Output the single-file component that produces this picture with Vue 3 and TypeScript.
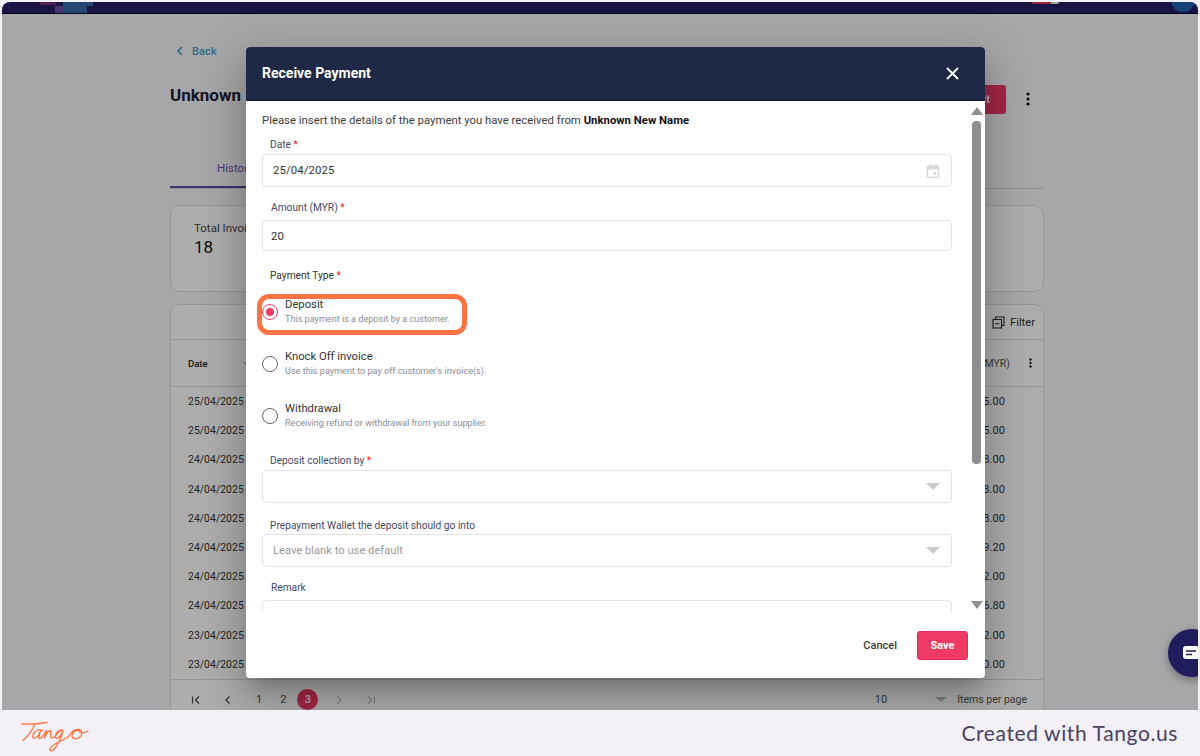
<script setup lang="ts">
interface PayType {
  id: string;
  title: string;
  hint: string;
  checked: boolean;
}

const rows = [
  { date: '25/04/2025', amount: '5.00' },
  { date: '25/04/2025', amount: '5.00' },
  { date: '24/04/2025', amount: '8.00' },
  { date: '24/04/2025', amount: '8.00' },
  { date: '24/04/2025', amount: '8.00' },
  { date: '24/04/2025', amount: '9.20' },
  { date: '24/04/2025', amount: '2.00' },
  { date: '24/04/2025', amount: '6.80' },
  { date: '23/04/2025', amount: '2.00' },
  { date: '23/04/2025', amount: '0.00' },
]

const payTypes: PayType[] = [
  { id: 'deposit', title: 'Deposit', hint: 'This payment is a deposit by a customer.', checked: true },
  { id: 'knock', title: 'Knock Off invoice', hint: "Use this payment to pay off customer's invoice(s).", checked: false },
  { id: 'withdraw', title: 'Withdrawal', hint: 'Receiving refund or withdrawal from your supplier.', checked: false },
]
</script>

<template>
  <div class="root">
    <div class="screen">
      <header class="topbar">
        <span class="px px-a"></span>
        <span class="px px-b"></span>
        <span class="px px-c"></span>
        <span class="px px-d"></span>
        <span class="px px-e"></span>
        <span class="px px-f"></span>
      </header>

      <main class="page">
        <div class="back">
          <svg width="12" height="12" viewBox="0 0 12 12"><path d="M8 2 4 6l4 4" fill="none" stroke="#3f9cc9" stroke-width="1.7" /></svg>
          <span>Back</span>
        </div>

        <div class="title-row">
          <h1>Unknown New Name</h1>
          <div class="title-actions">
            <button class="edit-btn">Edit</button>
            <svg class="dots" width="4" height="14" viewBox="0 0 4 14"><circle cx="2" cy="2" r="1.6" /><circle cx="2" cy="7" r="1.6" /><circle cx="2" cy="12" r="1.6" /></svg>
          </div>
        </div>

        <div class="tabs">
          <div class="tab">History</div>
        </div>

        <section class="summary">
          <div class="sum-label">Total Invoices</div>
          <div class="sum-value">18</div>
        </section>

        <section class="table-card">
          <div class="table-tools">
            <svg width="13" height="13" viewBox="0 0 13 13" fill="none" stroke="#2c2c2c" stroke-width="1.1"><rect x="1" y="3.5" width="8.5" height="8.5" /><path d="M3.5 3.5V1H12v8.5H9.5M3 7.8h4.5" /></svg>
            <span>Filter</span>
          </div>
          <div class="thead">
            <span class="th-date">Date</span>
            <svg class="th-sort" width="6" height="6" viewBox="0 0 6 6"><path d="M1 2l2 2 2-2" fill="none" stroke="#777" stroke-width="0.9" /></svg>
            <span class="th-amt">(MYR)</span>
            <svg class="th-dots" width="3" height="10" viewBox="0 0 3 10"><circle cx="1.5" cy="1.5" r="1.2" /><circle cx="1.5" cy="5" r="1.2" /><circle cx="1.5" cy="8.5" r="1.2" /></svg>
          </div>
          <div class="tbody">
            <div v-for="(row, i) in rows" :key="i" class="tr">
              <span>{{ row.date }}</span>
              <span class="amt">{{ row.amount }}</span>
            </div>
          </div>
          <div class="pager">
            <div class="pages">
              <svg width="10" height="10" viewBox="0 0 10 10" fill="none" stroke="#444" stroke-width="1.2"><path d="M1.5 1.5v7M8 1.5 4.5 5 8 8.5" /></svg>
              <svg class="pg-prev" width="10" height="10" viewBox="0 0 10 10" fill="none" stroke="#444" stroke-width="1.2"><path d="M6.5 1.5 3 5l3.5 3.5" /></svg>
              <span class="pg pg-1">1</span>
              <span class="pg pg-2">2</span>
              <span class="pg pg-on">3</span>
              <svg class="pg-next" width="10" height="10" viewBox="0 0 10 10" fill="none" stroke="#bbb" stroke-width="1.2"><path d="M3.5 1.5 7 5 3.5 8.5" /></svg>
              <svg class="pg-last" width="10" height="10" viewBox="0 0 10 10" fill="none" stroke="#bbb" stroke-width="1.2"><path d="M2 1.5 5.5 5 2 8.5M8.5 1.5v7" /></svg>
            </div>
            <div class="per-page">
              <span class="per-num">10</span>
              <span class="caret caret-sm"></span>
              <span class="per-text">Items per page</span>
            </div>
          </div>
        </section>
      </main>

      <div class="backdrop"></div>

      <div class="modal">
        <div class="modal-head">
          <span>Receive Payment</span>
          <svg width="13" height="13" viewBox="0 0 13 13"><path d="M1 1l11 11M12 1 1 12" stroke="#fff" stroke-width="1.9" /></svg>
        </div>

        <div class="modal-body">
          <p class="intro">Please insert the details of the payment you have received from <b>Unknown New Name</b></p>

          <label class="lbl lbl-date">Date <i>*</i></label>
          <div class="input input-date">
            <span>25/04/2025</span>
            <svg width="14" height="14" viewBox="0 0 14 14" fill="#d6d9df"><path d="M3 0h1.6v1.4h4.8V0H11v1.4h.8A1.6 1.6 0 0 1 13.4 3v9.4a1.6 1.6 0 0 1-1.6 1.6H2.2A1.6 1.6 0 0 1 .6 12.4V3a1.6 1.6 0 0 1 1.6-1.6H3zM2.2 5.4v7h9.6v-7zM7.4 8H10.4v3H7.4z" fill-rule="evenodd" /></svg>
          </div>

          <label class="lbl lbl-amount">Amount (MYR) <i>*</i></label>
          <div class="input input-amount"><span>20</span></div>

          <label class="lbl lbl-type">Payment Type <i>*</i></label>
          <div class="radios">
            <div v-for="t in payTypes" :key="t.id" class="radio-row">
              <span class="radio" :class="{ on: t.checked }"></span>
              <div class="radio-text">
                <div class="radio-title">{{ t.title }}</div>
                <div class="radio-hint">{{ t.hint }}</div>
              </div>
            </div>
          </div>

          <label class="lbl lbl-coll">Deposit collection by <i>*</i></label>
          <div class="input input-sel"><span></span><span class="caret"></span></div>

          <label class="lbl lbl-wallet">Prepayment Wallet the deposit should go into</label>
          <div class="input input-sel input-wallet"><span class="ph">Leave blank to use default</span><span class="caret"></span></div>

          <label class="lbl lbl-remark">Remark</label>
          <div class="input input-remark"></div>

          <div class="scrollbar">
            <span class="sb-up"></span>
            <span class="sb-thumb"></span>
            <span class="sb-down"></span>
          </div>
        </div>

        <div class="modal-foot">
          <span class="cancel">Cancel</span>
          <button class="save">Save</button>
        </div>
      </div>

      <div class="highlight"></div>

      <div class="chat">
        <svg width="16" height="14" viewBox="0 0 16 14"><rect width="16" height="13" rx="3" fill="#fff" /><path d="M3 5h10M3 8.5h6" stroke="#201c5d" stroke-width="1.3" /></svg>
      </div>
    </div>

    <footer class="tango">
      <svg class="tango-logo" width="70" height="34" viewBox="20 718 70 34" role="img" aria-label="Tango logo" fill="none" stroke="#ff7442" stroke-width="1.3" stroke-linecap="round" stroke-linejoin="round">
        <path d="M21.7 722C30 722.500 38 722 47 720.500" />
        <path d="M35 722C32 729 28 734 23 738.500" />
        <path d="M43 729C40 726 35 728 33 733C32 737 35 737 38 734L41 728C39 733 38 737 40 736.500C43 735 45 731 46.500 728.500C45.500 732 45 734 44.500 736C46 732 48 729 50.500 728.500C52 728.500 50.500 732 50.500 734.500C51 737 54 736 56 733.500C58 730 60 728 63 728.500C59 727 55 731 55.500 735C56 738 60 736 63 729C61 736 58 743 54 747.500C52 749.500 49 749 50 746.500C52 742 62 739 68 735C69.500 733.500 70.500 732 72 730C73.500 728 76 727 79 727.500C82 728 83 732 80 735C77 737.500 72 737.500 72 733.500C72 730.500 75.500 728 78.500 728.500C80 731.500 84 731.500 88 729" />
      </svg>
      <span class="tango-text">Created with Tango.us</span>
    </footer>
  </div>
</template>

<style scoped>
.root {
  width: 1200px;
  height: 756px;
  display: flex;
  flex-direction: column;
  background: #f3f1f7;
  font-family: Roboto, "Liberation Sans", sans-serif;
  overflow: hidden;
  position: relative;
}

.screen {
  position: relative;
  flex: 1;
  min-height: 0;
  margin: 2px 2px 0;
  border-radius: 8px 8px 0 0;
  overflow: hidden;
  background: #f6f7fa;
}

.topbar {
  position: relative;
  height: 11px;
  background: #241f66;
  border-bottom: 1px solid #0b0a33;
}

.px {
  position: absolute;
  display: block;
}
.px-a { left: 38px; top: 0; width: 16px; height: 3px; background: #7f2a7c; }
.px-b { left: 53px; top: 4px; width: 8px; height: 7px; background: #6a4fa8; }
.px-c { left: 61px; top: 0; width: 24px; height: 11px; background: #356aa8; }
.px-d { left: 85px; top: 0; width: 6px; height: 4px; background: #356aa8; }
.px-e { left: 1030px; top: 0; width: 27px; height: 2px; border-radius: 0 0 8px 8px; background: linear-gradient(90deg, #d83a55 70%, #eee 70%); }
.px-f { left: 1169px; top: -14px; width: 24px; height: 24px; border-radius: 50%; background: #1f62b0; }

.page {
  width: 874px;
  margin-left: 168px;
  color: #222;
}

.back {
  display: flex;
  align-items: center;
  gap: 6px;
  height: 16px;
  margin-top: 29px;
  margin-left: 4px;
  color: #3f9cc9;
  font-size: 11px;
  letter-spacing: 0.1px;
  font-weight: 500;
}

.title-row {
  display: flex;
  align-items: center;
  justify-content: space-between;
  height: 30px;
  margin-top: 21px;
  margin-right: 14px;
}

h1 {
  margin: 0;
  font-size: 17px;
  font-weight: 700;
  color: #1a2036;
}

.title-actions {
  display: flex;
  align-items: center;
  gap: 20px;
  margin-top: 8px;
}

.edit-btn {
  width: 70px;
  height: 29px;
  border: 0;
  border-radius: 3px;
  background: #ef3a66;
  color: #fff;
  font: 700 11px Roboto, sans-serif;
  text-align: right;
  padding-right: 16px;
}

.dots {
  fill: #111;
}

.tabs {
  height: 47px;
  margin-top: 31px;
  border-bottom: 1px solid #d5d6da;
}

.tab {
  width: 120px;
  height: 47px;
  box-sizing: border-box;
  padding: 20px 0 0 47px;
  border-bottom: 2px solid #5b4a9c;
  color: #6a55b0;
  font-size: 11.5px;
}

.summary {
  height: 87px;
  margin-top: 16px;
  box-sizing: border-box;
  padding: 15px 23px;
  border: 1px solid #dcdde0;
  border-radius: 10px;
  background: #fff;
}

.sum-label {
  font-size: 11.5px;
  color: #444;
}

.sum-value {
  margin-top: 2px;
  font-size: 17px;
  color: #111;
}

.table-card {
  margin-top: 12px;
  border: 1px solid #dcdde0;
  border-radius: 10px 10px 0 0;
  background: #fff;
  height: 410px;
  box-sizing: border-box;
}

.table-tools {
  display: flex;
  align-items: center;
  justify-content: flex-end;
  gap: 5px;
  height: 34px;
  padding-right: 8px;
  font-size: 11.2px;
  color: #333;
}

.thead {
  display: flex;
  align-items: center;
  height: 48px;
  box-sizing: border-box;
  padding: 0 11px 0 17px;
  border-top: 1px solid #dcdde0;
  border-bottom: 1px solid #dcdde0;
  font-size: 9.5px;
  font-weight: 500;
  color: #222;
}

.th-date {
  width: 55px;
}

.th-sort {
  flex: 1;
  max-width: 6px;
  margin-right: auto;
}

.th-amt {
  font-size: 10.5px;
  font-weight: 400;
  color: #555;
  margin-right: 19px;
}

.th-dots {
  fill: #222;
}

.tr {
  display: flex;
  justify-content: space-between;
  align-items: center;
  height: 29.2px;
  padding: 0 38px 0 17px;
  font-size: 10.4px;
  letter-spacing: 0.05px;
  color: #333;
}

.amt {
  font-size: 11px;
}

.pager {
  display: flex;
  justify-content: space-between;
  align-items: center;
  height: 40px;
  border-top: 1px solid #dcdde0;
  padding: 0 16px 8px 20px;
  font-size: 11px;
  color: #555;
}

.pages {
  display: flex;
  align-items: center;
}

.pg-prev { margin-left: 22px; }
.pg-1 { margin-left: 23px; }
.pg-2 { margin-left: 18px; }
.pg-on {
  margin-left: 11px;
  width: 21px;
  height: 21px;
  border-radius: 50%;
  background: #ef3a66;
  color: #fff;
  text-align: center;
  line-height: 21px;
  font-weight: 500;
}
.pg-next { margin-left: 16px; }
.pg-last { margin-left: 22px; }

.per-page {
  display: flex;
  align-items: center;
}

.per-num { margin-right: 48px; }
.per-text { margin-left: 10px; font-size: 10.5px; }

.backdrop {
  position: absolute;
  inset: 0;
  background: rgba(0, 0, 0, 0.32);
}

.modal {
  position: absolute;
  left: 244px;
  top: 45px;
  width: 739px;
  height: 631px;
  border-radius: 4px;
  overflow: hidden;
  background: #fff;
  display: flex;
  flex-direction: column;
  box-shadow: 0 11px 15px -7px rgba(0, 0, 0, 0.2), 0 24px 38px 3px rgba(0, 0, 0, 0.14), 0 9px 46px 8px rgba(0, 0, 0, 0.12);
}

.modal-head {
  flex: none;
  height: 54px;
  box-sizing: border-box;
  display: flex;
  align-items: center;
  justify-content: space-between;
  padding: 0 26px 0 16px;
  background: #1f2947;
  border-bottom: 1px solid #12182e;
  color: #fff;
  font-size: 14px;
  font-weight: 700;
}

.modal-head span {
  margin-top: -1px;
}

.modal-body {
  position: relative;
  flex: none;
  height: 512px;
  overflow: hidden;
  padding: 0 33px 0 16px;
  box-sizing: border-box;
}

.intro {
  margin: 12px 0 0;
  height: 14px;
  line-height: 14px;
  font-size: 11.35px;
  color: #3d3d3d;
}

.intro b {
  color: #111;
}

.lbl {
  display: block;
  height: 14px;
  line-height: 14px;
  margin-left: 8px;
  font-size: 10.2px;
  color: #44496a;
}

.lbl i {
  color: #e02020;
  font-style: normal;
}

.lbl-date { margin-top: 11px; }
.lbl-amount { margin-top: 14px; margin-left: 9px; }
.lbl-type { margin-top: 18px; color: #333; }
.lbl-coll { margin-top: 21px; }
.lbl-wallet { margin-top: 16px; }
.lbl-remark { margin-top: 14px; margin-left: 9px; }

.input {
  display: flex;
  align-items: center;
  justify-content: space-between;
  box-sizing: border-box;
  height: 33px;
  margin-top: 2px;
  padding: 0 11px 0 10px;
  border: 1px solid #e3e4e7;
  border-radius: 4px;
  font-size: 11.4px;
  letter-spacing: 0.1px;
  color: #333;
}

.input-date span {
  margin-top: -1px;
}

.input-amount {
  height: 31px;
  margin-top: 5px;
  padding-left: 8px;
}

.input-wallet { margin-top: 1px; }
.input-remark { margin-top: 5px; height: 40px; }

.ph {
  color: #9a9a9a;
  letter-spacing: 0;
  font-size: 11.2px;
}

.caret {
  width: 0;
  height: 0;
  border-left: 7px solid transparent;
  border-right: 7px solid transparent;
  border-top: 7px solid #c9c9c9;
}

.caret-sm {
  border-left-width: 6px;
  border-right-width: 6px;
  border-top-width: 5px;
  border-top-color: #bbb;
}

.radios {
  margin-top: 12px;
}

.radio-row {
  display: flex;
  align-items: center;
  gap: 7px;
  height: 34px;
  margin-bottom: 18px;
}

.radio {
  flex: none;
  position: relative;
  width: 16px;
  height: 16px;
  box-sizing: border-box;
  border: 1px solid #666;
  border-radius: 50%;
  background: #fff;
}

.radio.on {
  border-color: #ef3a66;
}

.radio.on::after {
  content: "";
  position: absolute;
  left: 3px;
  top: 3px;
  width: 8px;
  height: 8px;
  border-radius: 50%;
  background: #ef3a66;
}

.radio-title {
  height: 15px;
  line-height: 15px;
  font-size: 11.25px;
  color: #333;
}

.radio-hint {
  height: 15px;
  line-height: 15px;
  font-size: 9.1px;
  color: #8a8d96;
}

.scrollbar {
  position: absolute;
  right: 4px;
  top: 0;
  bottom: 0;
  width: 9px;
}

.scrollbar span {
  position: absolute;
  display: block;
}

.sb-up {
  left: -1.500px;
  top: 6px;
  width: 0;
  height: 0;
  border-left: 6px solid transparent;
  border-right: 6px solid transparent;
  border-bottom: 8px solid #8f8f8f;
}

.sb-thumb {
  left: 0;
  top: 20px;
  width: 9px;
  height: 343px;
  border-radius: 4px;
  background: #8f8f8f;
}

.sb-down {
  left: -1.500px;
  top: 500px;
  width: 0;
  height: 0;
  border-left: 6px solid transparent;
  border-right: 6px solid transparent;
  border-top: 8px solid #8f8f8f;
}

.modal-foot {
  flex: 1;
  display: flex;
  align-items: center;
  justify-content: flex-end;
  gap: 20px;
  padding: 0 17px 0 0;
}

.cancel {
  font-size: 11px;
  font-weight: 500;
  color: #3c3c3c;
}

.save {
  width: 51px;
  height: 29px;
  border: 1px solid #e02a58;
  border-radius: 3px;
  background: #ef3a66;
  color: #fff;
  font: 700 11px Roboto, sans-serif;
}

.highlight {
  position: absolute;
  left: 255px;
  top: 292px;
  width: 210px;
  height: 41px;
  box-sizing: border-box;
  border: 5px solid #ff7442;
  border-radius: 12px;
}

.chat {
  position: absolute;
  left: 1166px;
  top: 627px;
  width: 48px;
  height: 48px;
  border-radius: 50%;
  background: #201c5d;
  box-shadow: 0 3px 8px rgba(0, 0, 0, 0.35);
  display: flex;
  align-items: center;
  padding-left: 15px;
  box-sizing: border-box;
}

.tango {
  flex: none;
  height: 46px;
  display: flex;
  align-items: center;
  justify-content: space-between;
  padding: 0 22px 0 20px;
}

.tango-logo {
  margin-top: 8px;
}

.tango-text {
  font-family: Lato, "Liberation Sans", sans-serif;
  font-size: 21px;
  letter-spacing: 0.6px;
  color: #4a4064;
  margin-top: -2px;
}
</style>
